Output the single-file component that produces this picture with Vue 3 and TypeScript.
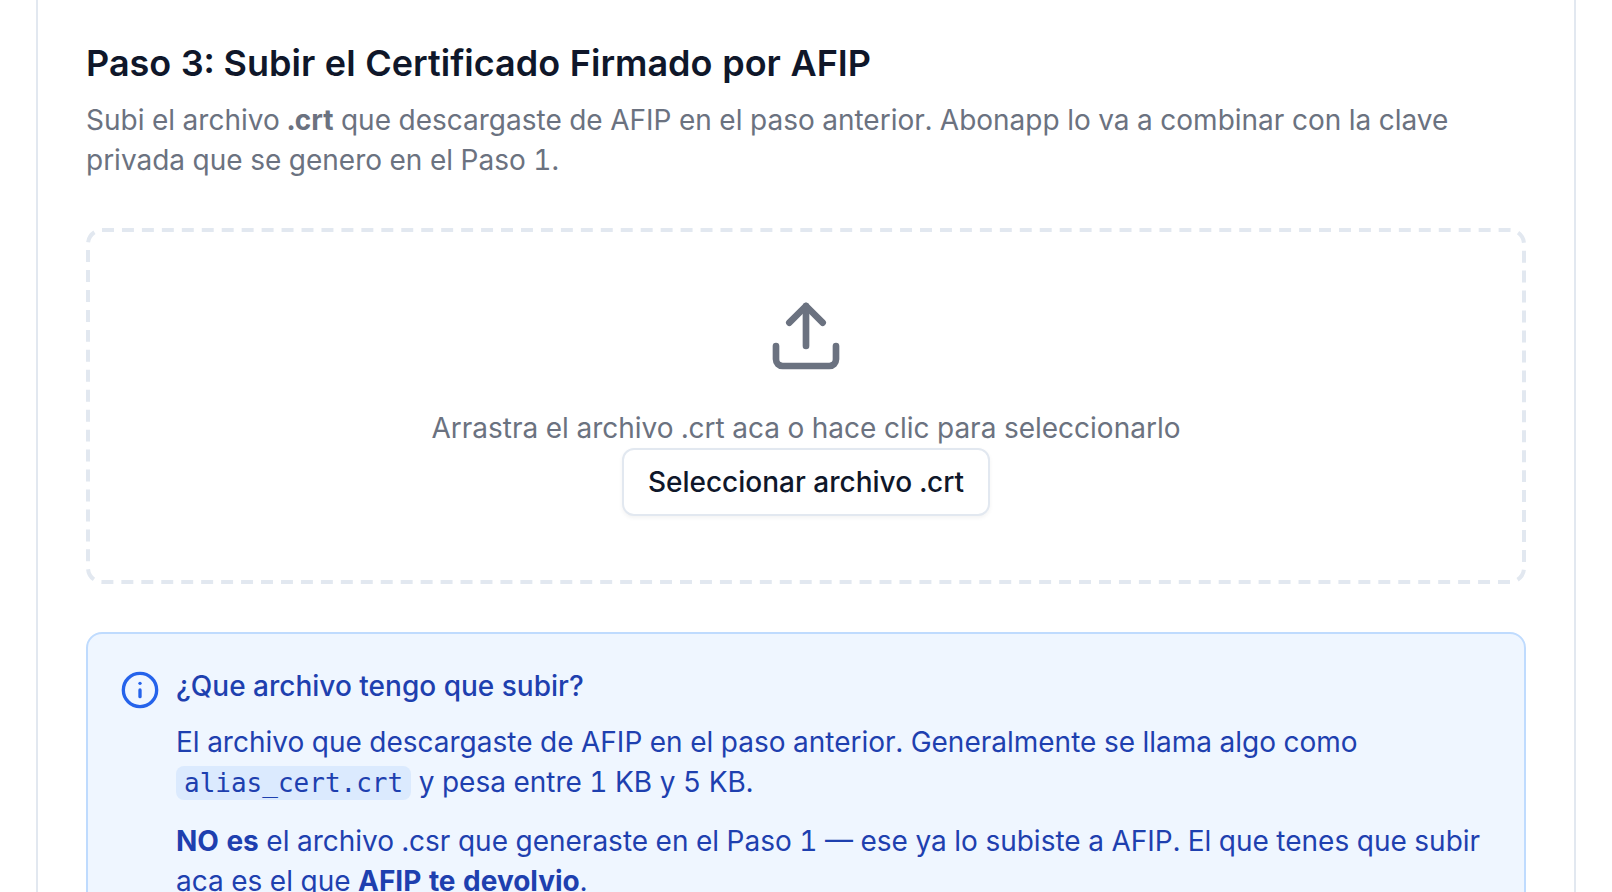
<script setup lang="ts">
import { ref } from 'vue'

const picker = ref<HTMLInputElement | null>(null)
const fileName = ref('')

function openPicker(): void {
  picker.value?.click()
}

function onPick(event: Event): void {
  const input = event.target as HTMLInputElement
  fileName.value = input.files?.[0]?.name ?? ''
}

function onDrop(event: DragEvent): void {
  fileName.value = event.dataTransfer?.files[0]?.name ?? ''
}
</script>

<template>
  <main class="page">
    <section class="card" aria-labelledby="step-title">
      <header class="head">
        <h2 id="step-title" class="title">Paso 3: Subir el Certificado Firmado por AFIP</h2>
        <p class="description">
          Subi el archivo <strong>.crt</strong> que descargaste de AFIP en el paso anterior. Abonapp lo va a
          combinar con la clave privada que se genero en el Paso 1.
        </p>
      </header>

      <div class="dropzone" @dragover.prevent @drop.prevent="onDrop">
        <svg class="outline" aria-hidden="true">
          <rect x="2" y="2" rx="14" pathLength="3560" />
        </svg>
        <svg class="upload-icon" viewBox="0 0 24 24" aria-hidden="true">
          <path d="M12 3v12" />
          <path d="m17 8-5-5-5 5" />
          <path d="M21 15v4a2 2 0 0 1-2 2H5a2 2 0 0 1-2-2v-4" />
        </svg>
        <p class="hint">{{ fileName || 'Arrastra el archivo .crt aca o hace clic para seleccionarlo' }}</p>
        <input ref="picker" type="file" accept=".crt" aria-label="Archivo .crt" hidden @change="onPick" />
        <button type="button" class="pick" @click="openPicker">Seleccionar archivo .crt</button>
      </div>

      <aside class="info">
        <svg class="info-icon" viewBox="0 0 24 24" aria-hidden="true">
          <circle cx="12" cy="12" r="10" />
          <path d="M12 16v-4" />
          <path d="M12 8h.01" />
        </svg>
        <div class="info-body">
          <h3 class="info-title">¿Que archivo tengo que subir?</h3>
          <p>
            El archivo que descargaste de AFIP en el paso anterior. Generalmente se llama algo como
            <code>alias_cert.crt</code> y pesa entre 1 KB y 5 KB.
          </p>
          <p>
            <strong>NO es</strong> el archivo .csr que generaste en el Paso 1 — ese ya lo subiste a AFIP. El que
            tenes que subir aca es el que <strong>AFIP te devolvio</strong>.
          </p>
        </div>
      </aside>
    </section>
  </main>
</template>

<style>
body {
  background: #ffffff;
}

html {
  overflow: hidden;
}
</style>

<style scoped>
.page {
  height: 100vh;
  overflow: hidden;
  padding: 0 36px;
  font-family: Inter, "Liberation Sans", sans-serif;
  font-size: 28px;
  font-variant-numeric: tabular-nums;
  line-height: 40px;
  color: #0f172a;
}

.card {
  display: flex;
  flex-direction: column;
  gap: 48px;
  padding: 36px 48px 48px;
  border: 2px solid #e2e8f0;
  border-width: 0 2px;
}

.head {
  display: flex;
  flex-direction: column;
  gap: 10px;
}

h2,
h3,
p {
  margin: 0;
}

.title {
  font-size: 36px;
  line-height: 54px;
  font-weight: 600;
}

.description,
.hint {
  color: #6b7280;
}

strong {
  font-weight: 700;
}

.dropzone {
  position: relative;
  display: flex;
  flex-direction: column;
  align-items: center;
  padding: 68px;
}

.outline {
  position: absolute;
  inset: 0;
  width: 100%;
  height: 100%;
  fill: none;
  stroke: #e2e8f0;
  stroke-width: 4;
  stroke-dasharray: 12 8;
  pointer-events: none;
}

.outline rect {
  width: calc(100% - 4px);
  height: calc(100% - 4px);
}

.upload-icon,
.info-icon {
  flex: none;
  fill: none;
  stroke: currentColor;
  stroke-width: 2;
  stroke-linecap: round;
  stroke-linejoin: round;
}

.upload-icon {
  width: 80px;
  height: 80px;
  margin-bottom: 32px;
  color: #6b7280;
}

.pick {
  padding: 12px 24px;
  border: 2px solid #e2e8f0;
  border-radius: 12px;
  background: #ffffff;
  box-shadow: 0 2px 4px rgb(0 0 0 / 5%);
  color: #0f172a;
  font: inherit;
  font-weight: 500;
  cursor: pointer;
}

.info {
  display: flex;
  gap: 16px;
  padding: 32px;
  border: 2px solid #bfdbfe;
  border-radius: 16px;
  background: #eff6ff;
  color: #1e40af;
}

.info-icon {
  width: 40px;
  height: 40px;
  margin-top: 4px;
  color: #2563eb;
}

.info-body {
  display: flex;
  flex-direction: column;
  gap: 16px;
  min-width: 0;
}

.info-title {
  font-size: 28px;
  font-weight: 500;
}

code {
  padding: 2px 8px;
  border-radius: 8px;
  background: #dbeafe;
  font-family: "DejaVu Sans Mono", "Liberation Mono", monospace;
  font-size: 26px;
  line-height: 43px;
}
</style>
